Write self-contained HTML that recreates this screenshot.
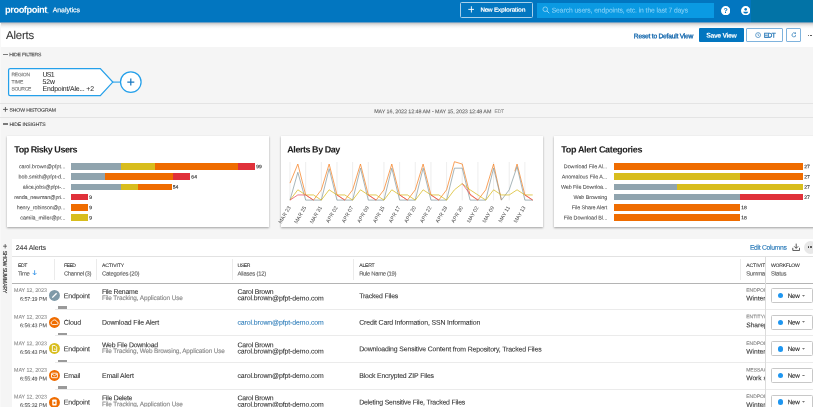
<!DOCTYPE html>
<html><head><meta charset="utf-8"><title>Alerts</title>
<style>
html,body{margin:0;padding:0;background:#fff;}
body{width:814px;height:412px;overflow:hidden;position:relative;font-family:"Liberation Sans",sans-serif;}
#app{position:absolute;left:0;top:0;width:813px;height:407px;background:#f5f5f5;overflow:hidden;}
.abs{position:absolute;}
.card{position:absolute;background:#fff;box-shadow:0 0.5px 2px rgba(0,0,0,.35);}
.hl{position:absolute;height:1px;background:#e4e4e4;}
.vl{position:absolute;width:1px;background:#ebebeb;}
.bar{position:absolute;height:6.5px;}
.newbtn{position:absolute;left:770.5px;width:42.2px;height:15px;border:0.8px solid #c8c8c8;border-radius:1.5px;background:#fff;box-sizing:border-box;}
</style></head><body><div id="app">

<div class="abs" style="left:0;top:22px;width:813px;height:25px;background:#fff;"></div>
<div class="abs" style="left:699.2px;top:28.2px;width:44.4px;height:13.6px;background:#0276c0;border-radius:1px;"></div>
<div class="abs" style="left:746.2px;top:28.2px;width:36.4px;height:13.6px;border:0.8px solid #7fb3dd;border-radius:1px;box-sizing:border-box;background:#fff;"></div>
<svg class="abs" style="left:755.2px;top:32.1px" width="6.2" height="6.2" viewBox="0 0 12 12"><circle cx="6" cy="6" r="4.8" fill="none" stroke="#2a7ab8" stroke-width="1.3"/><path d="M6 3.2V6.3L8.2 7.5" fill="none" stroke="#2a7ab8" stroke-width="1.2"/></svg>
<div class="abs" style="left:786.2px;top:28.2px;width:14.5px;height:13.6px;border:0.8px solid #7fb3dd;border-radius:1px;box-sizing:border-box;background:#fff;"></div>
<svg class="abs" style="left:790.6px;top:32.2px" width="5.8" height="5.8" viewBox="0 0 12 12"><path d="M10 6A4 4 0 1 1 8.6 3" fill="none" stroke="#2a7ab8" stroke-width="1.5"/><path d="M7 0.8L10.8 1.1L10.2 4.8Z" fill="#2a7ab8"/></svg>
<div class="abs" style="left:807.7px;top:34.5px;width:1.8px;height:1.8px;border-radius:50%;background:#444;"></div>
<div class="abs" style="left:810.1px;top:34.5px;width:1.8px;height:1.8px;border-radius:50%;background:#444;"></div>
<div class="abs" style="left:0;top:0;width:813px;height:22px;background:#0276c0;"></div>
<div class="abs" style="left:751.2px;top:0;width:62px;height:22px;background:#0273a6;"></div>
<div class="abs" style="left:0;top:22px;width:813px;height:1px;background:#6f9fc4;"></div>
<div class="abs" style="left:751.2px;top:22px;width:62px;height:1px;background:#6f9dba;"></div>
<div class="abs" style="left:0;top:23px;width:813px;height:6px;background:linear-gradient(rgba(0,0,0,.23),rgba(0,0,0,.155) 17%,rgba(0,0,0,.10) 34%,rgba(0,0,0,.06) 50%,rgba(0,0,0,.03) 67%,rgba(0,0,0,.012) 84%,rgba(0,0,0,0));"></div>
<div class="abs" style="left:460.1px;top:2.2px;width:72.6px;height:15.8px;border:0.8px solid #a8d0ea;border-radius:1.5px;box-sizing:border-box;"></div>
<svg class="abs" style="left:467.7px;top:5.9px" width="6.8" height="6.8" viewBox="0 0 12 12"><path d="M6 0.5V11.5M0.5 6H11.5" stroke="#fff" stroke-width="1.6"/></svg>
<div class="abs" style="left:537px;top:2.6px;width:176.7px;height:15px;background:#0a9ae3;"></div>
<svg class="abs" style="left:541.6px;top:6.3px" width="8" height="8" viewBox="0 0 16 16"><circle cx="6.5" cy="6.5" r="4.6" fill="none" stroke="#a9dcf7" stroke-width="1.5"/><path d="M10 10L14.5 14.5" stroke="#a9dcf7" stroke-width="1.7"/></svg>
<svg class="abs" style="left:721.2px;top:5.7px;will-change:transform" width="9.4" height="9.4" viewBox="0 0 24 24"><circle cx="12" cy="12" r="12" fill="#fff"/><text x="12" y="18.5" font-family="Liberation Sans" font-weight="bold" font-size="18" text-anchor="middle" fill="#0276c0">?</text></svg>
<svg class="abs" style="left:740.8px;top:5.7px" width="9.4" height="9.4" viewBox="0 0 24 24"><circle cx="12" cy="12" r="12" fill="#fff"/><circle cx="12" cy="8.6" r="3.3" fill="#0276c0"/><path d="M5.6 14.4H18.4C18 17.2 15.2 19.2 12 19.2C8.8 19.2 6 17.2 5.6 14.4Z" fill="#0276c0"/></svg>
<div class="abs" style="left:0;top:23px;width:1px;height:384px;background:#f8f8f8;"></div>
<div class="abs" style="left:3.1px;top:53.7px;width:4.6px;height:1.2px;background:#7a7a7a;"></div>
<svg class="abs" style="left:6px;top:66px" width="140" height="32" viewBox="0 0 140 32">
<path d="M4.2 2.5H94.3L106.8 16.1L94.3 29.7H4.2Q2.6 29.7 2.6 28.1V4.1Q2.6 2.5 4.2 2.5Z" fill="#fff" stroke="#25a0ea" stroke-width="1.25"/>
<path d="M106.8 16.1H114.5" stroke="#25a0ea" stroke-width="1.1"/>
<circle cx="124.8" cy="16.1" r="10.3" fill="#fff" stroke="#25a0ea" stroke-width="1.25"/>
<path d="M124.8 12.6V19.6M121.3 16.1H128.3" stroke="#1a78c0" stroke-width="1.25"/>
</svg>
<div class="hl" style="left:0;top:103px;width:813px;"></div>
<svg class="abs" style="left:2.9px;top:107.3px" width="4.8" height="4.8" viewBox="0 0 10 10"><path d="M5 0V10M0 5H10" stroke="#555" stroke-width="1.9"/></svg>
<div class="hl" style="left:0;top:117.2px;width:813px;"></div>
<div class="abs" style="left:3.1px;top:123.4px;width:4.6px;height:1.2px;background:#7a7a7a;"></div>
<div class="card" style="left:7px;top:135.6px;width:262.4px;height:91px;"></div>
<div class="card" style="left:280.6px;top:135.6px;width:262.8px;height:91px;"></div>
<div class="card" style="left:553.6px;top:135.6px;width:262px;height:91px;"></div>
<div class="bar" style="left:71.4px;top:163.15px;width:183.70px;background:#e0313a;"></div>
<div class="bar" style="left:71.4px;top:163.15px;width:167.00px;background:#ef6c00;"></div>
<div class="bar" style="left:71.4px;top:163.15px;width:83.50px;background:#d8bd1d;"></div>
<div class="bar" style="left:71.4px;top:163.15px;width:50.10px;background:#90a4ae;"></div>
<div class="bar" style="left:71.4px;top:173.39px;width:118.76px;background:#e0313a;"></div>
<div class="bar" style="left:71.4px;top:173.39px;width:102.06px;background:#ef6c00;"></div>
<div class="bar" style="left:71.4px;top:173.39px;width:33.40px;background:#90a4ae;"></div>
<div class="bar" style="left:71.4px;top:183.63px;width:100.20px;background:#ef6c00;"></div>
<div class="bar" style="left:71.4px;top:183.63px;width:66.80px;background:#d8bd1d;"></div>
<div class="bar" style="left:71.4px;top:183.63px;width:50.10px;background:#90a4ae;"></div>
<div class="bar" style="left:71.4px;top:193.87px;width:16.70px;background:#e0313a;"></div>
<div class="bar" style="left:71.4px;top:204.11px;width:16.70px;background:#ef6c00;"></div>
<div class="bar" style="left:71.4px;top:214.35px;width:16.70px;background:#d8bd1d;"></div>
<div class="bar" style="left:613.8px;top:163.15px;width:189.20px;background:#ef6c00;"></div>
<div class="bar" style="left:613.8px;top:173.39px;width:189.20px;background:#ef6c00;"></div>
<div class="bar" style="left:613.8px;top:173.39px;width:126.13px;background:#d8bd1d;"></div>
<div class="bar" style="left:613.8px;top:183.63px;width:189.20px;background:#d8bd1d;"></div>
<div class="bar" style="left:613.8px;top:183.63px;width:63.07px;background:#90a4ae;"></div>
<div class="bar" style="left:613.8px;top:193.87px;width:189.20px;background:#e0313a;"></div>
<div class="bar" style="left:613.8px;top:193.87px;width:126.13px;background:#90a4ae;"></div>
<div class="bar" style="left:613.8px;top:204.11px;width:126.13px;background:#ef6c00;"></div>
<div class="bar" style="left:613.8px;top:214.35px;width:126.13px;background:#ef6c00;"></div>
<svg class="abs" style="left:270px;top:130px;will-change:transform" width="280" height="100" viewBox="270 130 280 100"><path d="M290.00 162V200.4" stroke="#e3e3e3" stroke-width="0.6"/><path d="M305.66 162V200.4" stroke="#e3e3e3" stroke-width="0.6"/><path d="M321.32 162V200.4" stroke="#e3e3e3" stroke-width="0.6"/><path d="M336.98 162V200.4" stroke="#e3e3e3" stroke-width="0.6"/><path d="M352.64 162V200.4" stroke="#e3e3e3" stroke-width="0.6"/><path d="M368.30 162V200.4" stroke="#e3e3e3" stroke-width="0.6"/><path d="M383.96 162V200.4" stroke="#e3e3e3" stroke-width="0.6"/><path d="M399.62 162V200.4" stroke="#e3e3e3" stroke-width="0.6"/><path d="M415.28 162V200.4" stroke="#e3e3e3" stroke-width="0.6"/><path d="M430.94 162V200.4" stroke="#e3e3e3" stroke-width="0.6"/><path d="M446.60 162V200.4" stroke="#e3e3e3" stroke-width="0.6"/><path d="M462.26 162V200.4" stroke="#e3e3e3" stroke-width="0.6"/><path d="M477.92 162V200.4" stroke="#e3e3e3" stroke-width="0.6"/><path d="M493.58 162V200.4" stroke="#e3e3e3" stroke-width="0.6"/><path d="M509.24 162V200.4" stroke="#e3e3e3" stroke-width="0.6"/><path d="M524.90 162V200.4" stroke="#e3e3e3" stroke-width="0.6"/><polyline points="290.00,183.10 297.83,164.05 305.66,194.95 313.49,200.10 321.32,189.80 329.15,164.05 336.98,194.95 344.81,200.10 352.64,189.80 360.47,164.05 368.30,194.95 376.13,200.10 383.96,189.80 391.79,164.05 399.62,194.95 407.45,200.10 415.28,189.80 423.11,164.05 430.94,194.95 438.77,200.10 446.60,189.80 454.43,161.73 462.26,164.05 470.09,194.95 477.92,200.10 485.75,189.80 493.58,164.05 501.41,200.10" fill="none" stroke="#f57c1a" stroke-width="0.72" stroke-linejoin="round"/><polyline points="514.88,171.26 517.07,164.05 524.90,194.95 532.73,200.10" fill="none" stroke="#f57c1a" stroke-width="0.72" stroke-linejoin="round"/><polyline points="290.00,200.10 297.83,172.29 305.66,200.10 313.49,200.10 321.32,200.10 329.15,168.69 336.98,200.10 344.81,200.10 352.64,200.10 360.47,168.17 368.30,200.10 376.13,200.10 383.96,200.10 391.79,168.17 399.62,200.10 407.45,200.10 415.28,200.10 423.11,168.17 430.94,200.10 438.77,200.10 446.60,200.10 454.43,168.17 462.26,168.17 470.09,200.10 477.92,200.10 485.75,200.10 493.58,168.17 501.41,200.10 509.24,189.80 517.07,166.62 524.90,200.10 532.73,200.10" fill="none" stroke="#84999f" stroke-width="0.72" stroke-linejoin="round"/><polyline points="290.00,200.10 297.83,189.80 305.66,194.95 313.49,194.95 321.32,200.10 329.15,189.80 336.98,194.95 344.81,194.95 352.64,200.10 360.47,189.80 368.30,194.95 376.13,194.95 383.96,200.10 391.79,189.80 399.62,194.95 407.45,194.95 415.28,200.10 423.11,189.80 430.94,194.95 438.77,194.95 446.60,200.10 454.43,189.80 462.26,183.62 470.09,189.80 477.92,194.95 485.75,200.10 493.58,189.80 501.41,194.95 509.24,194.95 517.07,189.80 524.90,194.95 532.73,194.95" fill="none" stroke="#d6b716" stroke-width="0.72" stroke-linejoin="round"/><polyline points="290.00,200.10 297.83,194.95 305.66,194.95 313.49,200.10" fill="none" stroke="#e8465a" stroke-width="0.72" stroke-linejoin="round"/><polyline points="336.98,194.95 344.81,200.10" fill="none" stroke="#e8465a" stroke-width="0.72" stroke-linejoin="round"/><polyline points="368.30,194.95 376.13,200.10" fill="none" stroke="#e8465a" stroke-width="0.72" stroke-linejoin="round"/><polyline points="399.62,194.95 407.45,200.10" fill="none" stroke="#e8465a" stroke-width="0.72" stroke-linejoin="round"/><polyline points="430.94,194.95 438.77,200.10" fill="none" stroke="#e8465a" stroke-width="0.72" stroke-linejoin="round"/><polyline points="462.26,183.62 470.09,194.18 477.92,200.10" fill="none" stroke="#e8465a" stroke-width="0.72" stroke-linejoin="round"/><polyline points="524.90,194.95 532.73,200.10" fill="none" stroke="#e8465a" stroke-width="0.72" stroke-linejoin="round"/><text x="290.90" y="207.4" transform="rotate(-60 290.90 207.4)" text-anchor="end" font-size="5.3" fill="#4a4a4a" font-family="Liberation Sans">MAR 23</text><text x="306.56" y="207.4" transform="rotate(-60 306.56 207.4)" text-anchor="end" font-size="5.3" fill="#4a4a4a" font-family="Liberation Sans">MAR 25</text><text x="322.22" y="207.4" transform="rotate(-60 322.22 207.4)" text-anchor="end" font-size="5.3" fill="#4a4a4a" font-family="Liberation Sans">MAR 31</text><text x="337.88" y="207.4" transform="rotate(-60 337.88 207.4)" text-anchor="end" font-size="5.3" fill="#4a4a4a" font-family="Liberation Sans">APR 02</text><text x="353.54" y="207.4" transform="rotate(-60 353.54 207.4)" text-anchor="end" font-size="5.3" fill="#4a4a4a" font-family="Liberation Sans">APR 07</text><text x="369.20" y="207.4" transform="rotate(-60 369.20 207.4)" text-anchor="end" font-size="5.3" fill="#4a4a4a" font-family="Liberation Sans">APR 09</text><text x="384.86" y="207.4" transform="rotate(-60 384.86 207.4)" text-anchor="end" font-size="5.3" fill="#4a4a4a" font-family="Liberation Sans">APR 15</text><text x="400.52" y="207.4" transform="rotate(-60 400.52 207.4)" text-anchor="end" font-size="5.3" fill="#4a4a4a" font-family="Liberation Sans">APR 17</text><text x="416.18" y="207.4" transform="rotate(-60 416.18 207.4)" text-anchor="end" font-size="5.3" fill="#4a4a4a" font-family="Liberation Sans">APR 20</text><text x="431.84" y="207.4" transform="rotate(-60 431.84 207.4)" text-anchor="end" font-size="5.3" fill="#4a4a4a" font-family="Liberation Sans">APR 22</text><text x="447.50" y="207.4" transform="rotate(-60 447.50 207.4)" text-anchor="end" font-size="5.3" fill="#4a4a4a" font-family="Liberation Sans">APR 28</text><text x="463.16" y="207.4" transform="rotate(-60 463.16 207.4)" text-anchor="end" font-size="5.3" fill="#4a4a4a" font-family="Liberation Sans">APR 30</text><text x="478.82" y="207.4" transform="rotate(-60 478.82 207.4)" text-anchor="end" font-size="5.3" fill="#4a4a4a" font-family="Liberation Sans">MAY 02</text><text x="494.48" y="207.4" transform="rotate(-60 494.48 207.4)" text-anchor="end" font-size="5.3" fill="#4a4a4a" font-family="Liberation Sans">MAY 09</text><text x="510.14" y="207.4" transform="rotate(-60 510.14 207.4)" text-anchor="end" font-size="5.3" fill="#4a4a4a" font-family="Liberation Sans">MAY 11</text><text x="525.80" y="207.4" transform="rotate(-60 525.80 207.4)" text-anchor="end" font-size="5.3" fill="#4a4a4a" font-family="Liberation Sans">MAY 13</text></svg>
<svg class="abs" style="left:0;top:0;pointer-events:none;will-change:transform" width="813" height="407" viewBox="0 0 813 407" font-family="Liberation Sans"><text x="6.00" y="39.08" transform="rotate(0.03 6.00 39.08)" font-size="11.4" fill="#333" style="letter-spacing:-0.188px;" stroke="#333" stroke-width="0.07">Alerts</text><text x="633.80" y="38.20" transform="rotate(0.03 633.80 38.20)" font-size="6.7" fill="#1568ad" style="letter-spacing:-0.228px;" stroke="#1568ad" stroke-width="0.32">Reset to Default View</text><text x="706.20" y="37.63" transform="rotate(0.03 706.20 37.63)" font-size="6.8" fill="#fff" font-weight="bold" style="letter-spacing:-0.305px;" stroke="#fff" stroke-width="0.05">Save View</text><text x="763.80" y="37.56" transform="rotate(0.03 763.80 37.56)" font-size="6.6" fill="#2a7ab8" style="letter-spacing:-0.596px;" stroke="#2a7ab8" stroke-width="0.3">EDT</text><text x="5.00" y="12.73" transform="rotate(0.03 5.00 12.73)" font-size="9.3" fill="#fff" font-weight="bold" style="letter-spacing:-0.447px;">proofpoint</text><text x="47.30" y="13.19" transform="rotate(0.03 47.30 13.19)" font-size="5" fill="#cfe6f5" font-weight="bold" stroke="#cfe6f5" stroke-width="0.05">.</text><text x="52.80" y="12.27" transform="rotate(0.03 52.80 12.27)" font-size="6.9" fill="#fff" style="letter-spacing:-0.053px;" stroke="#fff" stroke-width="0.15">Analytics</text><text x="480.40" y="11.76" transform="rotate(0.03 480.40 11.76)" font-size="6.3" fill="#fff" font-weight="bold" style="letter-spacing:-0.303px;" stroke="#fff" stroke-width="0.05">New Exploration</text><text x="551.70" y="12.43" transform="rotate(0.03 551.70 12.43)" font-size="6.8" fill="#86d0f6" style="letter-spacing:-0.097px;" stroke="#86d0f6" stroke-width="0.07">Search users, endpoints, etc. in the last 7 days</text><text x="9.30" y="56.33" transform="rotate(0.03 9.30 56.33)" font-size="5.1" fill="#3c3c3c" style="letter-spacing:-0.180px;" stroke="#3c3c3c" stroke-width="0.09">HIDE FILTERS</text><text x="11.40" y="76.29" transform="rotate(0.03 11.40 76.29)" font-size="5.0" fill="#7a7a7a" style="letter-spacing:-0.206px;" stroke="#7a7a7a" stroke-width="0.14">REGION</text><text x="42.50" y="76.87" transform="rotate(0.03 42.50 76.87)" font-size="6.9" fill="#333" style="letter-spacing:-0.702px;" stroke="#333" stroke-width="0.07">US1</text><text x="11.40" y="83.49" transform="rotate(0.03 11.40 83.49)" font-size="5.0" fill="#7a7a7a" style="letter-spacing:0.012px;" stroke="#7a7a7a" stroke-width="0.14">TIME</text><text x="42.50" y="84.07" transform="rotate(0.03 42.50 84.07)" font-size="6.9" fill="#333" style="letter-spacing:-0.119px;" stroke="#333" stroke-width="0.07">52w</text><text x="11.40" y="90.49" transform="rotate(0.03 11.40 90.49)" font-size="5.0" fill="#7a7a7a" style="letter-spacing:-0.301px;" stroke="#7a7a7a" stroke-width="0.14">SOURCE</text><text x="42.50" y="91.07" transform="rotate(0.03 42.50 91.07)" font-size="6.9" fill="#333" style="letter-spacing:-0.183px;" stroke="#333" stroke-width="0.07">Endpoint/Ale... +2</text><text x="9.40" y="111.63" transform="rotate(0.03 9.40 111.63)" font-size="5.1" fill="#3c3c3c" style="letter-spacing:-0.101px;" stroke="#3c3c3c" stroke-width="0.09">SHOW HISTOGRAM</text><text x="374.20" y="113.13" transform="rotate(0.03 374.20 113.13)" font-size="5.4" fill="#5a5a5a" style="letter-spacing:-0.079px;" stroke="#5a5a5a" stroke-width="0.06">MAY 16, 2022 12:48 AM - MAY 15, 2023 12:48 AM</text><text x="494.60" y="112.99" transform="rotate(0.03 494.60 112.99)" font-size="5.0" fill="#999" style="letter-spacing:-0.233px;" stroke="#999" stroke-width="0.14">EDT</text><text x="9.40" y="125.93" transform="rotate(0.03 9.40 125.93)" font-size="5.1" fill="#3c3c3c" style="letter-spacing:-0.112px;" stroke="#3c3c3c" stroke-width="0.09">HIDE INSIGHTS</text><text x="14.30" y="152.42" transform="rotate(0.03 14.30 152.42)" font-size="9.0" fill="#222" font-weight="bold" style="letter-spacing:-0.478px;" stroke="#222" stroke-width="0.05">Top Risky Users</text><text x="287.30" y="152.42" transform="rotate(0.03 287.30 152.42)" font-size="9.0" fill="#222" font-weight="bold" style="letter-spacing:-0.456px;" stroke="#222" stroke-width="0.05">Alerts By Day</text><text x="561.30" y="152.42" transform="rotate(0.03 561.30 152.42)" font-size="9.0" fill="#222" font-weight="bold" style="letter-spacing:-0.336px;" stroke="#222" stroke-width="0.05">Top Alert Categories</text><text x="65.38" y="168.33" transform="rotate(0.03 65.38 168.33)" font-size="5.4" fill="#4a4a4a" text-anchor="end" style="letter-spacing:-0.017px;" stroke="#4a4a4a" stroke-width="0.06">carol.brown@pfpt...</text><text x="256.30" y="168.19" transform="rotate(0.03 256.30 168.19)" font-size="5.0" fill="#333" stroke="#333" stroke-width="0.14">99</text><text x="65.38" y="178.57" transform="rotate(0.03 65.38 178.57)" font-size="5.4" fill="#4a4a4a" text-anchor="end" style="letter-spacing:-0.017px;" stroke="#4a4a4a" stroke-width="0.06">bob.smith@pfpt-d...</text><text x="191.36" y="178.43" transform="rotate(0.03 191.36 178.43)" font-size="5.0" fill="#333" stroke="#333" stroke-width="0.14">64</text><text x="65.36" y="188.81" transform="rotate(0.03 65.36 188.81)" font-size="5.4" fill="#4a4a4a" text-anchor="end" style="letter-spacing:-0.039px;" stroke="#4a4a4a" stroke-width="0.06">alice.jobs@pfpt-...</text><text x="172.80" y="188.67" transform="rotate(0.03 172.80 188.67)" font-size="5.0" fill="#333" stroke="#333" stroke-width="0.14">54</text><text x="65.29" y="199.05" transform="rotate(0.03 65.29 199.05)" font-size="5.4" fill="#4a4a4a" text-anchor="end" style="letter-spacing:-0.107px;" stroke="#4a4a4a" stroke-width="0.06">renda_newman@pri...</text><text x="89.30" y="198.91" transform="rotate(0.03 89.30 198.91)" font-size="5.0" fill="#333" stroke="#333" stroke-width="0.14">9</text><text x="65.31" y="209.29" transform="rotate(0.03 65.31 209.29)" font-size="5.4" fill="#4a4a4a" text-anchor="end" style="letter-spacing:-0.086px;" stroke="#4a4a4a" stroke-width="0.06">henry_robinson@p...</text><text x="89.30" y="209.15" transform="rotate(0.03 89.30 209.15)" font-size="5.0" fill="#333" stroke="#333" stroke-width="0.14">9</text><text x="65.36" y="219.53" transform="rotate(0.03 65.36 219.53)" font-size="5.4" fill="#4a4a4a" text-anchor="end" style="letter-spacing:-0.043px;" stroke="#4a4a4a" stroke-width="0.06">camila_miller@pr...</text><text x="89.30" y="219.39" transform="rotate(0.03 89.30 219.39)" font-size="5.0" fill="#333" stroke="#333" stroke-width="0.14">9</text><text x="607.23" y="168.33" transform="rotate(0.03 607.23 168.33)" font-size="5.4" fill="#4a4a4a" text-anchor="end" style="letter-spacing:-0.066px;" stroke="#4a4a4a" stroke-width="0.06">Download File Al...</text><text x="804.20" y="168.19" transform="rotate(0.03 804.20 168.19)" font-size="5.0" fill="#333" stroke="#333" stroke-width="0.14">27</text><text x="607.26" y="178.57" transform="rotate(0.03 607.26 178.57)" font-size="5.4" fill="#4a4a4a" text-anchor="end" style="letter-spacing:-0.045px;" stroke="#4a4a4a" stroke-width="0.06">Anomalous File A...</text><text x="804.20" y="178.43" transform="rotate(0.03 804.20 178.43)" font-size="5.0" fill="#333" stroke="#333" stroke-width="0.14">27</text><text x="607.20" y="188.81" transform="rotate(0.03 607.20 188.81)" font-size="5.4" fill="#4a4a4a" text-anchor="end" style="letter-spacing:-0.097px;" stroke="#4a4a4a" stroke-width="0.06">Web File Downloa...</text><text x="804.20" y="188.67" transform="rotate(0.03 804.20 188.67)" font-size="5.0" fill="#333" stroke="#333" stroke-width="0.14">27</text><text x="607.22" y="199.05" transform="rotate(0.03 607.22 199.05)" font-size="5.4" fill="#4a4a4a" text-anchor="end" style="letter-spacing:-0.080px;" stroke="#4a4a4a" stroke-width="0.06">Web Browsing</text><text x="804.20" y="198.91" transform="rotate(0.03 804.20 198.91)" font-size="5.0" fill="#333" stroke="#333" stroke-width="0.14">27</text><text x="607.21" y="209.29" transform="rotate(0.03 607.21 209.29)" font-size="5.4" fill="#4a4a4a" text-anchor="end" style="letter-spacing:-0.091px;" stroke="#4a4a4a" stroke-width="0.06">File Share Alert</text><text x="741.13" y="209.15" transform="rotate(0.03 741.13 209.15)" font-size="5.0" fill="#333" stroke="#333" stroke-width="0.14">18</text><text x="607.22" y="219.53" transform="rotate(0.03 607.22 219.53)" font-size="5.4" fill="#4a4a4a" text-anchor="end" style="letter-spacing:-0.082px;" stroke="#4a4a4a" stroke-width="0.06">File Download Bl...</text><text x="741.13" y="219.39" transform="rotate(0.03 741.13 219.39)" font-size="5.0" fill="#333" stroke="#333" stroke-width="0.14">18</text></svg>
<div class="abs" style="left:12.2px;top:239.2px;width:801px;height:168px;background:#fff;"></div>
<svg class="abs" style="left:3.1px;top:244.2px" width="4.4" height="4.4" viewBox="0 0 10 10"><path d="M5 0V10M0 5H10" stroke="#333" stroke-width="1.5"/></svg>
<svg class="abs" style="left:791.8px;top:243.2px" width="8.4" height="8.4" viewBox="0 0 16 16"><path d="M8 1.2V10M4.2 6.4L8 10.2L11.8 6.4" fill="none" stroke="#444" stroke-width="1.7"/><path d="M1.5 9.2V14.2H14.5V9.2" fill="none" stroke="#444" stroke-width="1.7"/></svg>
<div class="abs" style="left:804.2px;top:240.6px;width:13.2px;height:13.2px;border-radius:50%;background:#e8e8e8;"></div>
<div class="abs" style="left:807.6px;top:246.4px;width:1.9px;height:1.9px;border-radius:50%;background:#333;"></div>
<div class="abs" style="left:810.1px;top:246.4px;width:1.9px;height:1.9px;border-radius:50%;background:#333;"></div>
<div class="hl" style="left:12.2px;top:255.8px;width:801px;background:#e2e2e2;"></div>
<svg class="abs" style="left:31.6px;top:270.4px" width="5.2" height="5.6" viewBox="0 0 10 11"><path d="M5 0.5V9.5M1.2 5.8L5 9.6L8.8 5.8" fill="none" stroke="#1e88e5" stroke-width="1.5"/></svg>
<div class="vl" style="left:53.90px;top:258.6px;height:21px;"></div>
<div class="vl" style="left:95.80px;top:258.6px;height:21px;"></div>
<div class="vl" style="left:231.90px;top:258.6px;height:21px;"></div>
<div class="vl" style="left:352.90px;top:258.6px;height:21px;"></div>
<div class="vl" style="left:740.30px;top:258.6px;height:21px;"></div>
<div class="hl" style="left:12.2px;top:282.9px;width:801px;background:#b4b4b4;"></div>
<svg class="abs" style="left:49.25px;top:290.25px" width="10.9" height="10.9" viewBox="0 0 24 24"><circle cx="12" cy="12" r="12" fill="#7f9aa8"/><path d="M7.2 16.8L16.8 7.2" stroke="#fff" stroke-width="3" stroke-linecap="butt"/></svg>
<div class="hl" style="left:55px;top:308.90px;width:758px;background:#ebebeb;"></div>
<div class="abs" style="left:58.2px;top:306.40px;width:8.8px;height:2.4px;background:#9a9a9a;"></div>
<svg class="abs" style="left:49.25px;top:316.83px" width="10.9" height="10.9" viewBox="0 0 24 24"><circle cx="12" cy="12" r="12" fill="#ef6c00"/><path d="M7.3 16.6H16.9A3.1 3.1 0 0 0 17.2 10.4A5.3 5.3 0 0 0 7.2 9.6A3.6 3.6 0 0 0 7.3 16.6Z" fill="none" stroke="#fff" stroke-width="1.9" stroke-linejoin="round"/></svg>
<div class="hl" style="left:55px;top:335.48px;width:758px;background:#ebebeb;"></div>
<div class="abs" style="left:58.2px;top:332.98px;width:8.8px;height:2.4px;background:#9a9a9a;"></div>
<svg class="abs" style="left:49.25px;top:343.41px" width="10.9" height="10.9" viewBox="0 0 24 24"><circle cx="12" cy="12" r="12" fill="#d8bd1d"/><path d="M7.4 5.4H13.4L17 9V18.8H7.4Z" fill="none" stroke="#fff" stroke-width="2" stroke-linejoin="round"/><path d="M12.4 11.6V14.6H14.6" fill="none" stroke="#fff" stroke-width="1.6"/></svg>
<div class="hl" style="left:55px;top:362.06px;width:758px;background:#ebebeb;"></div>
<div class="abs" style="left:58.2px;top:359.56px;width:8.8px;height:2.4px;background:#9a9a9a;"></div>
<svg class="abs" style="left:49.25px;top:369.99px" width="10.9" height="10.9" viewBox="0 0 24 24"><circle cx="12" cy="12" r="12" fill="#ef6c00"/><rect x="5.6" y="7" width="12.8" height="10" rx="1.2" fill="none" stroke="#fff" stroke-width="2"/><path d="M6 8.6L12 12.8L18 8.6" fill="none" stroke="#fff" stroke-width="1.8"/></svg>
<div class="hl" style="left:55px;top:388.64px;width:758px;background:#ebebeb;"></div>
<div class="abs" style="left:58.2px;top:386.14px;width:8.8px;height:2.4px;background:#9a9a9a;"></div>
<svg class="abs" style="left:49.25px;top:396.57px" width="10.9" height="10.9" viewBox="0 0 24 24"><circle cx="12" cy="12" r="12" fill="#ef6c00"/><rect x="7.2" y="5.6" width="9.6" height="13" rx="1.4" fill="#fff"/><path d="M10 10.4H14V15.2H10Z" fill="#ef6c00"/></svg>
<svg class="abs" style="left:0;top:0;pointer-events:none;will-change:transform" width="813" height="407" viewBox="0 0 813 407" font-family="Liberation Sans"><text x="3.2" y="250.8" transform="rotate(90 3.2 250.8)" font-size="5.3" fill="#3a3a3a" stroke="#3a3a3a" stroke-width="0.15" style="letter-spacing:-0.22px">SHOW SUMMARY</text><text x="15.80" y="250.01" transform="rotate(0.03 15.80 250.01)" font-size="7.0" fill="#333" style="letter-spacing:-0.094px;" stroke="#333" stroke-width="0.07">244 Alerts</text><text x="749.90" y="249.73" transform="rotate(0.03 749.90 249.73)" font-size="6.8" fill="#2a7ab8" style="letter-spacing:-0.318px;" stroke="#2a7ab8" stroke-width="0.14">Edit Columns</text><text x="17.90" y="267.11" transform="rotate(0.03 17.90 267.11)" font-size="5.05" fill="#333" style="letter-spacing:-0.303px;" stroke="#333" stroke-width="0.09">EDT</text><text x="17.90" y="275.51" transform="rotate(0.03 17.90 275.51)" font-size="5.9" fill="#666" style="letter-spacing:-0.319px;" stroke="#666" stroke-width="0.14">Time</text><text x="63.90" y="267.11" transform="rotate(0.03 63.90 267.11)" font-size="5.05" fill="#333" style="letter-spacing:-0.467px;" stroke="#333" stroke-width="0.09">FEED</text><text x="63.90" y="275.51" transform="rotate(0.03 63.90 275.51)" font-size="5.9" fill="#666" style="letter-spacing:-0.316px;" stroke="#666" stroke-width="0.14">Channel (3)</text><text x="101.90" y="267.11" transform="rotate(0.03 101.90 267.11)" font-size="5.05" fill="#333" style="letter-spacing:-0.052px;" stroke="#333" stroke-width="0.09">ACTIVITY</text><text x="101.90" y="275.51" transform="rotate(0.03 101.90 275.51)" font-size="5.9" fill="#666" style="letter-spacing:-0.221px;" stroke="#666" stroke-width="0.14">Categories (20)</text><text x="237.50" y="267.11" transform="rotate(0.03 237.50 267.11)" font-size="5.05" fill="#333" style="letter-spacing:-0.383px;" stroke="#333" stroke-width="0.09">USER</text><text x="237.50" y="275.51" transform="rotate(0.03 237.50 275.51)" font-size="5.9" fill="#666" style="letter-spacing:-0.209px;" stroke="#666" stroke-width="0.14">Aliases (12)</text><text x="359.20" y="267.11" transform="rotate(0.03 359.20 267.11)" font-size="5.05" fill="#333" style="letter-spacing:-0.177px;" stroke="#333" stroke-width="0.09">ALERT</text><text x="359.20" y="275.51" transform="rotate(0.03 359.20 275.51)" font-size="5.9" fill="#666" style="letter-spacing:-0.334px;" stroke="#666" stroke-width="0.14">Rule Name (19)</text><text x="46.88" y="292.10" transform="rotate(0.03 46.88 292.10)" font-size="5.3" fill="#8a8a8a" text-anchor="end" style="letter-spacing:-0.016px;" stroke="#8a8a8a" stroke-width="0.08">MAY 12, 2023</text><text x="46.87" y="300.80" transform="rotate(0.03 46.87 300.80)" font-size="5.3" fill="#4a4a4a" text-anchor="end" style="letter-spacing:-0.029px;" stroke="#4a4a4a" stroke-width="0.06">6:57:19 PM</text><text x="63.80" y="298.21" transform="rotate(0.03 63.80 298.21)" font-size="7.0" fill="#333" style="letter-spacing:-0.205px;" stroke="#333" stroke-width="0.07">Endpoint</text><text x="101.90" y="293.97" transform="rotate(0.03 101.90 293.97)" font-size="6.9" fill="#2e2e2e" style="letter-spacing:-0.271px;" stroke="#2e2e2e" stroke-width="0.07">File Rename</text><text x="101.90" y="299.89" transform="rotate(0.03 101.90 299.89)" font-size="6.4" fill="#8a8a8a" style="letter-spacing:-0.101px;" stroke="#8a8a8a" stroke-width="0.14">File Tracking, Application Use</text><text x="237.50" y="293.97" transform="rotate(0.03 237.50 293.97)" font-size="6.9" fill="#2e2e2e" style="letter-spacing:-0.175px;" stroke="#2e2e2e" stroke-width="0.07">Carol Brown</text><text x="237.50" y="300.37" transform="rotate(0.03 237.50 300.37)" font-size="6.9" fill="#2e2e2e" style="letter-spacing:-0.095px;" stroke="#2e2e2e" stroke-width="0.07">carol.brown@pfpt-demo.com</text><text x="359.20" y="298.17" transform="rotate(0.03 359.20 298.17)" font-size="6.9" fill="#2e2e2e" style="letter-spacing:-0.170px;" stroke="#2e2e2e" stroke-width="0.07">Tracked Files</text><text x="46.88" y="318.68" transform="rotate(0.03 46.88 318.68)" font-size="5.3" fill="#8a8a8a" text-anchor="end" style="letter-spacing:-0.016px;" stroke="#8a8a8a" stroke-width="0.08">MAY 12, 2023</text><text x="46.87" y="327.38" transform="rotate(0.03 46.87 327.38)" font-size="5.3" fill="#4a4a4a" text-anchor="end" style="letter-spacing:-0.029px;" stroke="#4a4a4a" stroke-width="0.06">6:56:43 PM</text><text x="63.80" y="324.79" transform="rotate(0.03 63.80 324.79)" font-size="7.0" fill="#333" style="letter-spacing:-0.239px;" stroke="#333" stroke-width="0.07">Cloud</text><text x="101.90" y="324.75" transform="rotate(0.03 101.90 324.75)" font-size="6.9" fill="#2e2e2e" style="letter-spacing:-0.120px;" stroke="#2e2e2e" stroke-width="0.07">Download File Alert</text><text x="237.50" y="324.75" transform="rotate(0.03 237.50 324.75)" font-size="6.9" fill="#2a7ab8" style="letter-spacing:-0.095px;" stroke="#2a7ab8" stroke-width="0.07">carol.brown@pfpt-demo.com</text><text x="359.20" y="324.75" transform="rotate(0.03 359.20 324.75)" font-size="6.9" fill="#2e2e2e" style="letter-spacing:-0.127px;" stroke="#2e2e2e" stroke-width="0.07">Credit Card Information, SSN Information</text><text x="46.88" y="345.26" transform="rotate(0.03 46.88 345.26)" font-size="5.3" fill="#8a8a8a" text-anchor="end" style="letter-spacing:-0.016px;" stroke="#8a8a8a" stroke-width="0.08">MAY 12, 2023</text><text x="46.87" y="353.96" transform="rotate(0.03 46.87 353.96)" font-size="5.3" fill="#4a4a4a" text-anchor="end" style="letter-spacing:-0.029px;" stroke="#4a4a4a" stroke-width="0.06">6:56:43 PM</text><text x="63.80" y="351.37" transform="rotate(0.03 63.80 351.37)" font-size="7.0" fill="#333" style="letter-spacing:-0.205px;" stroke="#333" stroke-width="0.07">Endpoint</text><text x="101.90" y="347.13" transform="rotate(0.03 101.90 347.13)" font-size="6.9" fill="#2e2e2e" style="letter-spacing:-0.213px;" stroke="#2e2e2e" stroke-width="0.07">Web File Download</text><text x="101.90" y="353.05" transform="rotate(0.03 101.90 353.05)" font-size="6.4" fill="#8a8a8a" style="letter-spacing:-0.129px;" stroke="#8a8a8a" stroke-width="0.14">File Tracking, Web Browsing, Application Use</text><text x="237.50" y="347.13" transform="rotate(0.03 237.50 347.13)" font-size="6.9" fill="#2e2e2e" style="letter-spacing:-0.175px;" stroke="#2e2e2e" stroke-width="0.07">Carol Brown</text><text x="237.50" y="353.53" transform="rotate(0.03 237.50 353.53)" font-size="6.9" fill="#2e2e2e" style="letter-spacing:-0.095px;" stroke="#2e2e2e" stroke-width="0.07">carol.brown@pfpt-demo.com</text><text x="359.20" y="351.33" transform="rotate(0.03 359.20 351.33)" font-size="6.9" fill="#2e2e2e" style="letter-spacing:-0.138px;" stroke="#2e2e2e" stroke-width="0.07">Downloading Sensitive Content from Repository, Tracked Files</text><text x="46.88" y="371.84" transform="rotate(0.03 46.88 371.84)" font-size="5.3" fill="#8a8a8a" text-anchor="end" style="letter-spacing:-0.016px;" stroke="#8a8a8a" stroke-width="0.08">MAY 12, 2023</text><text x="46.87" y="380.54" transform="rotate(0.03 46.87 380.54)" font-size="5.3" fill="#4a4a4a" text-anchor="end" style="letter-spacing:-0.029px;" stroke="#4a4a4a" stroke-width="0.06">6:55:49 PM</text><text x="63.80" y="377.95" transform="rotate(0.03 63.80 377.95)" font-size="7.0" fill="#333" style="letter-spacing:-0.223px;" stroke="#333" stroke-width="0.07">Email</text><text x="101.90" y="377.91" transform="rotate(0.03 101.90 377.91)" font-size="6.9" fill="#2e2e2e" style="letter-spacing:-0.094px;" stroke="#2e2e2e" stroke-width="0.07">Email Alert</text><text x="237.50" y="377.91" transform="rotate(0.03 237.50 377.91)" font-size="6.9" fill="#2e2e2e" style="letter-spacing:-0.095px;" stroke="#2e2e2e" stroke-width="0.07">carol.brown@pfpt-demo.com</text><text x="359.20" y="377.91" transform="rotate(0.03 359.20 377.91)" font-size="6.9" fill="#2e2e2e" style="letter-spacing:-0.163px;" stroke="#2e2e2e" stroke-width="0.07">Block Encrypted ZIP Files</text><text x="46.88" y="398.42" transform="rotate(0.03 46.88 398.42)" font-size="5.3" fill="#8a8a8a" text-anchor="end" style="letter-spacing:-0.016px;" stroke="#8a8a8a" stroke-width="0.08">MAY 12, 2023</text><text x="46.87" y="407.12" transform="rotate(0.03 46.87 407.12)" font-size="5.3" fill="#4a4a4a" text-anchor="end" style="letter-spacing:-0.029px;" stroke="#4a4a4a" stroke-width="0.06">6:55:32 PM</text><text x="63.80" y="404.53" transform="rotate(0.03 63.80 404.53)" font-size="7.0" fill="#333" style="letter-spacing:-0.205px;" stroke="#333" stroke-width="0.07">Endpoint</text><text x="101.90" y="400.29" transform="rotate(0.03 101.90 400.29)" font-size="6.9" fill="#2e2e2e" style="letter-spacing:-0.240px;" stroke="#2e2e2e" stroke-width="0.07">File Delete</text><text x="101.90" y="406.21" transform="rotate(0.03 101.90 406.21)" font-size="6.4" fill="#8a8a8a" style="letter-spacing:-0.101px;" stroke="#8a8a8a" stroke-width="0.14">File Tracking, Application Use</text><text x="237.50" y="400.29" transform="rotate(0.03 237.50 400.29)" font-size="6.9" fill="#2e2e2e" style="letter-spacing:-0.175px;" stroke="#2e2e2e" stroke-width="0.07">Carol Brown</text><text x="237.50" y="406.69" transform="rotate(0.03 237.50 406.69)" font-size="6.9" fill="#2e2e2e" style="letter-spacing:-0.095px;" stroke="#2e2e2e" stroke-width="0.07">carol.brown@pfpt-demo.com</text><text x="359.20" y="404.49" transform="rotate(0.03 359.20 404.49)" font-size="6.9" fill="#2e2e2e" style="letter-spacing:-0.186px;" stroke="#2e2e2e" stroke-width="0.07">Deleting Sensitive File, Tracked Files</text><text x="746.20" y="267.11" transform="rotate(0.03 746.20 267.11)" font-size="5.05" fill="#333" style="letter-spacing:-0.052px;" stroke="#333" stroke-width="0.09">ACTIVITY</text><text x="746.20" y="275.51" transform="rotate(0.03 746.20 275.51)" font-size="5.9" fill="#666" style="letter-spacing:-0.372px;" stroke="#666" stroke-width="0.14">Summary</text><text x="746.20" y="291.79" transform="rotate(0.03 746.20 291.79)" font-size="5.0" fill="#8a8a8a" stroke="#8a8a8a" stroke-width="0.14">ENDPOINT</text><text x="746.20" y="300.60" transform="rotate(0.03 746.20 300.60)" font-size="6.7" fill="#2e2e2e" stroke="#2e2e2e" stroke-width="0.07">Winter</text><text x="746.20" y="318.37" transform="rotate(0.03 746.20 318.37)" font-size="5.0" fill="#8a8a8a" stroke="#8a8a8a" stroke-width="0.14">ENTITY/</text><text x="746.20" y="327.18" transform="rotate(0.03 746.20 327.18)" font-size="6.7" fill="#2e2e2e" stroke="#2e2e2e" stroke-width="0.07">Sharep</text><text x="746.20" y="344.95" transform="rotate(0.03 746.20 344.95)" font-size="5.0" fill="#8a8a8a" stroke="#8a8a8a" stroke-width="0.14">ENDPOINT</text><text x="746.20" y="353.76" transform="rotate(0.03 746.20 353.76)" font-size="6.7" fill="#2e2e2e" stroke="#2e2e2e" stroke-width="0.07">Winter</text><text x="746.20" y="371.53" transform="rotate(0.03 746.20 371.53)" font-size="5.0" fill="#8a8a8a" stroke="#8a8a8a" stroke-width="0.14">MESSAGE</text><text x="746.20" y="380.34" transform="rotate(0.03 746.20 380.34)" font-size="6.7" fill="#2e2e2e" stroke="#2e2e2e" stroke-width="0.07">Work s</text><text x="746.20" y="398.11" transform="rotate(0.03 746.20 398.11)" font-size="5.0" fill="#8a8a8a" stroke="#8a8a8a" stroke-width="0.14">ENDPOINT</text><text x="746.20" y="406.92" transform="rotate(0.03 746.20 406.92)" font-size="6.7" fill="#2e2e2e" stroke="#2e2e2e" stroke-width="0.07">Winter</text></svg>
<div class="abs" style="left:765px;top:256.8px;width:48px;height:26.1px;background:#fff;"></div>
<div class="abs" style="left:765px;top:284.20px;width:48px;height:23px;background:#fff;"></div>
<div class="abs" style="left:765px;top:310.78px;width:48px;height:23px;background:#fff;"></div>
<div class="abs" style="left:765px;top:337.36px;width:48px;height:23px;background:#fff;"></div>
<div class="abs" style="left:765px;top:363.94px;width:48px;height:23px;background:#fff;"></div>
<div class="abs" style="left:765px;top:390.52px;width:48px;height:23px;background:#fff;"></div>
<div class="vl" style="left:764.6px;top:256.6px;height:151px;background:#dcdcdc;"></div>
<div class="newbtn" style="top:288.20px;"></div>
<div class="abs" style="left:777.7px;top:292.95px;width:5.5px;height:5.5px;border-radius:50%;background:#1e96f0;"></div>
<svg class="abs" style="left:802.3px;top:294.80px" width="3" height="1.8" viewBox="0 0 10 6"><path d="M0 0H10L5 6Z" fill="#777"/></svg>
<div class="newbtn" style="top:314.78px;"></div>
<div class="abs" style="left:777.7px;top:319.53px;width:5.5px;height:5.5px;border-radius:50%;background:#1e96f0;"></div>
<svg class="abs" style="left:802.3px;top:321.38px" width="3" height="1.8" viewBox="0 0 10 6"><path d="M0 0H10L5 6Z" fill="#777"/></svg>
<div class="newbtn" style="top:341.36px;"></div>
<div class="abs" style="left:777.7px;top:346.11px;width:5.5px;height:5.5px;border-radius:50%;background:#1e96f0;"></div>
<svg class="abs" style="left:802.3px;top:347.96px" width="3" height="1.8" viewBox="0 0 10 6"><path d="M0 0H10L5 6Z" fill="#777"/></svg>
<div class="newbtn" style="top:367.94px;"></div>
<div class="abs" style="left:777.7px;top:372.69px;width:5.5px;height:5.5px;border-radius:50%;background:#1e96f0;"></div>
<svg class="abs" style="left:802.3px;top:374.54px" width="3" height="1.8" viewBox="0 0 10 6"><path d="M0 0H10L5 6Z" fill="#777"/></svg>
<div class="newbtn" style="top:394.52px;"></div>
<div class="abs" style="left:777.7px;top:399.27px;width:5.5px;height:5.5px;border-radius:50%;background:#1e96f0;"></div>
<svg class="abs" style="left:802.3px;top:401.12px" width="3" height="1.8" viewBox="0 0 10 6"><path d="M0 0H10L5 6Z" fill="#777"/></svg>
<svg class="abs" style="left:0;top:0;pointer-events:none;will-change:transform" width="813" height="407" viewBox="0 0 813 407" font-family="Liberation Sans"><text x="771.00" y="267.11" transform="rotate(0.03 771.00 267.11)" font-size="5.05" fill="#333" style="letter-spacing:-0.210px;" stroke="#333" stroke-width="0.09">WORKFLOW</text><text x="771.00" y="275.51" transform="rotate(0.03 771.00 275.51)" font-size="5.9" fill="#666" style="letter-spacing:-0.234px;" stroke="#666" stroke-width="0.14">Status</text><text x="787.80" y="297.96" transform="rotate(0.03 787.80 297.96)" font-size="6.3" fill="#333" style="letter-spacing:-0.270px;" stroke="#333" stroke-width="0.14">New</text><text x="787.80" y="324.54" transform="rotate(0.03 787.80 324.54)" font-size="6.3" fill="#333" style="letter-spacing:-0.270px;" stroke="#333" stroke-width="0.14">New</text><text x="787.80" y="351.12" transform="rotate(0.03 787.80 351.12)" font-size="6.3" fill="#333" style="letter-spacing:-0.270px;" stroke="#333" stroke-width="0.14">New</text><text x="787.80" y="377.70" transform="rotate(0.03 787.80 377.70)" font-size="6.3" fill="#333" style="letter-spacing:-0.270px;" stroke="#333" stroke-width="0.14">New</text><text x="787.80" y="404.28" transform="rotate(0.03 787.80 404.28)" font-size="6.3" fill="#333" style="letter-spacing:-0.270px;" stroke="#333" stroke-width="0.14">New</text></svg>
</div></body></html>
